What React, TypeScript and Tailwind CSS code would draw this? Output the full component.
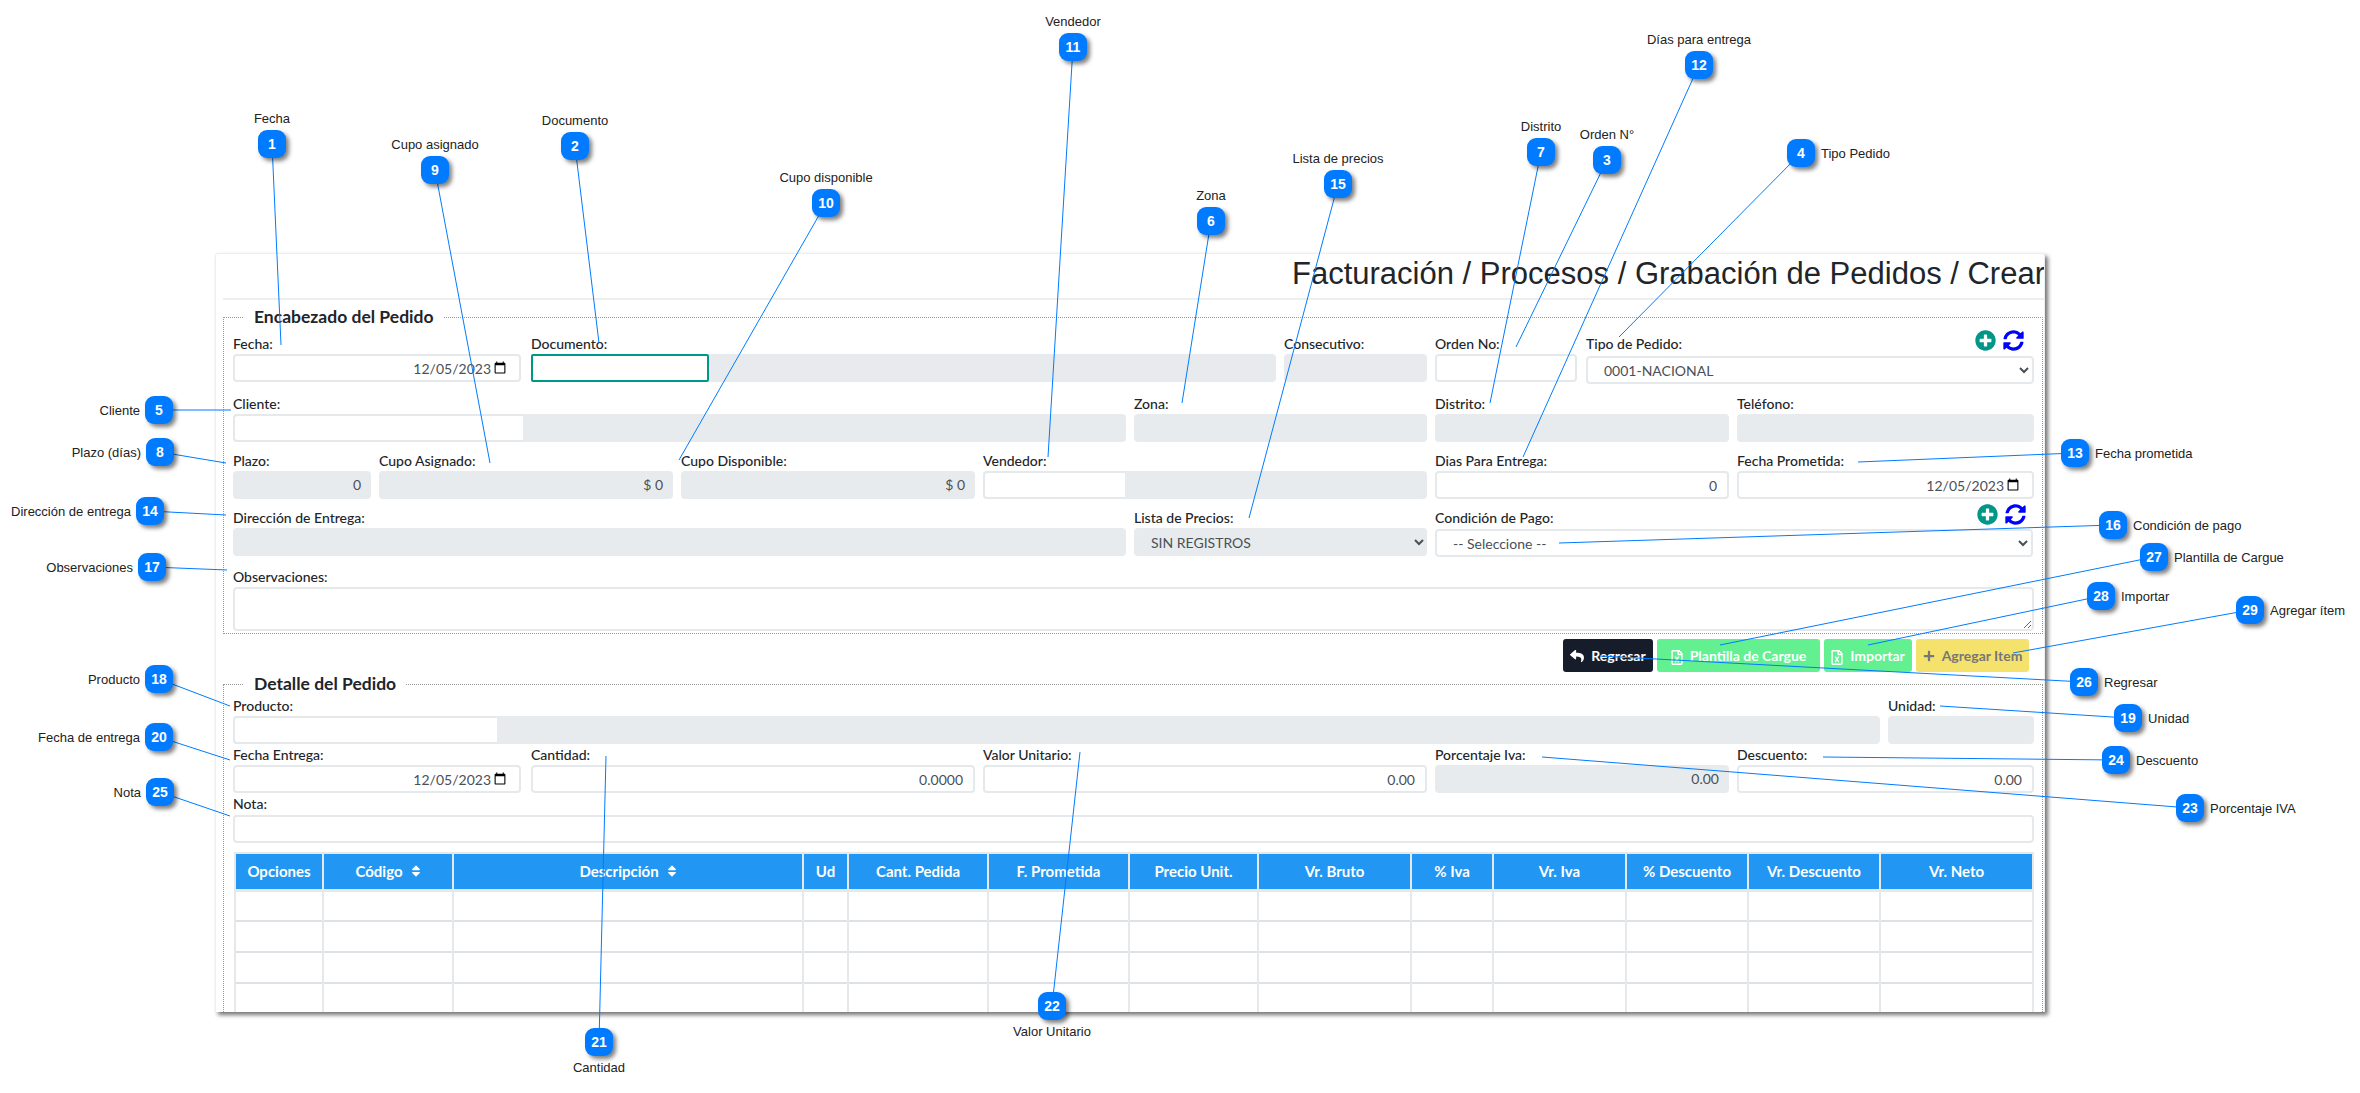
import { FaPlus, FaPlusCircle, FaRegFileExcel, FaReply, FaSort, FaSyncAlt } from "react-icons/fa";

const fontLato = "font-['Lato','Liberation_Sans',sans-serif]";
const inputBase = "block h-[28px] w-full rounded-[4px] border-2 border-[#e6e9eb] bg-white px-[10px] text-[14px] text-[#495057] outline-none";
const grayBox = "block h-[28px] w-full rounded-[4px] bg-[#e8ebed] px-[10px] text-right text-[14px] leading-[28px] text-[#495057]";
const labelClass = "block h-[20px] text-[14px] font-medium leading-[20px] text-[#212529]";
const btnClass = "flex h-[33px] items-center justify-center gap-[7px] rounded-[3px] text-[14px] font-bold";
const dateClass =
  "[&::-webkit-datetime-edit]:justify-end [&::-webkit-datetime-edit-day-field]:p-0 [&::-webkit-datetime-edit-month-field]:p-0 [&::-webkit-datetime-edit-year-field]:p-0";

type Side = "top" | "bottom" | "left" | "right";

const BADGES: { n: number; text: string; side: Side; pos: string }[] = [
  { n: 1, text: "Fecha", side: "top", pos: "left-[258px] top-[130px]" },
  { n: 2, text: "Documento", side: "top", pos: "left-[561px] top-[132px]" },
  { n: 3, text: "Orden N°", side: "top", pos: "left-[1593px] top-[146px]" },
  { n: 4, text: "Tipo Pedido", side: "right", pos: "left-[1787px] top-[139px]" },
  { n: 5, text: "Cliente", side: "left", pos: "left-[145px] top-[396px]" },
  { n: 6, text: "Zona", side: "top", pos: "left-[1197px] top-[207px]" },
  { n: 7, text: "Distrito", side: "top", pos: "left-[1527px] top-[138px]" },
  { n: 8, text: "Plazo (días)", side: "left", pos: "left-[146px] top-[438px]" },
  { n: 9, text: "Cupo asignado", side: "top", pos: "left-[421px] top-[156px]" },
  { n: 10, text: "Cupo disponible", side: "top", pos: "left-[812px] top-[189px]" },
  { n: 11, text: "Vendedor", side: "top", pos: "left-[1059px] top-[33px]" },
  { n: 12, text: "Días para entrega", side: "top", pos: "left-[1685px] top-[51px]" },
  { n: 13, text: "Fecha prometida", side: "right", pos: "left-[2061px] top-[439px]" },
  { n: 14, text: "Dirección de entrega", side: "left", pos: "left-[136px] top-[497px]" },
  { n: 15, text: "Lista de precios", side: "top", pos: "left-[1324px] top-[170px]" },
  { n: 16, text: "Condición de pago", side: "right", pos: "left-[2099px] top-[511px]" },
  { n: 17, text: "Observaciones", side: "left", pos: "left-[138px] top-[553px]" },
  { n: 18, text: "Producto", side: "left", pos: "left-[145px] top-[665px]" },
  { n: 19, text: "Unidad", side: "right", pos: "left-[2114px] top-[704px]" },
  { n: 20, text: "Fecha de entrega", side: "left", pos: "left-[145px] top-[723px]" },
  { n: 21, text: "Cantidad", side: "bottom", pos: "left-[585px] top-[1028px]" },
  { n: 22, text: "Valor Unitario", side: "bottom", pos: "left-[1038px] top-[992px]" },
  { n: 23, text: "Porcentaje IVA", side: "right", pos: "left-[2176px] top-[794px]" },
  { n: 24, text: "Descuento", side: "right", pos: "left-[2102px] top-[746px]" },
  { n: 25, text: "Nota", side: "left", pos: "left-[146px] top-[778px]" },
  { n: 26, text: "Regresar", side: "right", pos: "left-[2070px] top-[668px]" },
  { n: 27, text: "Plantilla de Cargue", side: "right", pos: "left-[2140px] top-[543px]" },
  { n: 28, text: "Importar", side: "right", pos: "left-[2087px] top-[582px]" },
  { n: 29, text: "Agregar ítem", side: "right", pos: "left-[2236px] top-[596px]" },
];

const LINES: number[][] = [
  [272, 144, 281, 345],
  [575, 146, 599, 343],
  [1607, 160, 1516, 347],
  [1801, 153, 1619, 337],
  [159, 410, 231, 410],
  [1211, 221, 1182, 403],
  [1541, 152, 1490, 403],
  [160, 452, 226, 463],
  [435, 170, 490, 463],
  [826, 203, 679, 460],
  [1073, 47, 1048, 457],
  [1699, 65, 1523, 457],
  [2075, 453, 1858, 462],
  [150, 511, 226, 515],
  [1338, 184, 1249, 518],
  [2113, 525, 1559, 543],
  [152, 567, 227, 570],
  [159, 679, 230, 706],
  [2128, 718, 1940, 706],
  [159, 737, 230, 760],
  [599, 1042, 606, 756],
  [1052, 1006, 1080, 752],
  [2190, 808, 1542, 757],
  [2116, 760, 1823, 757],
  [160, 792, 230, 816],
  [2084, 682, 1600, 656],
  [2154, 557, 1720, 645],
  [2101, 596, 1868, 645],
  [2250, 610, 2013, 653],
];

const COLUMNS = [
  { label: "Opciones", w: "w-[88px]" },
  { label: "Código", w: "w-[130px]", sort: true },
  { label: "Descripción", w: "w-[350px]", sort: true },
  { label: "Ud", w: "w-[45px]" },
  { label: "Cant. Pedida", w: "w-[140px]" },
  { label: "F. Prometida", w: "w-[141px]" },
  { label: "Precio Unit.", w: "w-[129px]" },
  { label: "Vr. Bruto", w: "w-[153px]" },
  { label: "% Iva", w: "w-[82px]" },
  { label: "Vr. Iva", w: "w-[133px]" },
  { label: "% Descuento", w: "w-[122px]" },
  { label: "Vr. Descuento", w: "w-[132px]" },
  { label: "Vr. Neto", w: "w-[153px]" },
];

function Badge({ n, text, side, pos }: { n: number; text: string; side: Side; pos: string }) {
  const captionClass = {
    top: "bottom-full left-1/2 mb-[4px] -translate-x-1/2",
    bottom: "top-full left-1/2 mt-[4px] -translate-x-1/2",
    left: "right-full top-1/2 mr-[5px] -translate-y-1/2",
    right: "left-full top-1/2 ml-[6px] -translate-y-1/2",
  }[side];
  return (
    <div className={`absolute flex h-[28px] w-[28px] items-center justify-center rounded-[9px] bg-[#007bff] text-[14px] font-bold text-white shadow-[3px_3px_4px_rgba(0,0,0,0.5)] ${pos}`}>
      {n}
      <span className={`absolute whitespace-nowrap text-[13px] font-normal leading-[15px] text-[#222] ${captionClass}`}>
        {text}
      </span>
    </div>
  );
}

function Label({ children }: { children: React.ReactNode }) {
  return <label className={labelClass}>{children}</label>;
}

function DateField({ label, width }: { label: string; width: string }) {
  return (
    <div className={width}>
      <Label>{label}</Label>
      <input type="date" defaultValue="2023-12-05" className={`${inputBase} ${dateClass}`} />
    </div>
  );
}

function GrayField({ label, value, width }: { label: string; value?: string; width: string }) {
  return (
    <div className={width}>
      <Label>{label}</Label>
      <div className={grayBox}>{value}</div>
    </div>
  );
}

function InputField({ label, value, width }: { label: string; value?: string; width: string }) {
  return (
    <div className={width}>
      <Label>{label}</Label>
      <input type="text" defaultValue={value} className={`${inputBase} text-right`} />
    </div>
  );
}

function LookupField({ label, width, inputWidth, focused }: { label: string; width: string; inputWidth: string; focused?: boolean }) {
  return (
    <div className={width}>
      <Label>{label}</Label>
      <div className="flex h-[28px] rounded-[4px] bg-[#e8ebed]">
        <input
          type="text"
          className={`block h-[28px] ${inputWidth} bg-white outline-none ${focused ? "rounded-[2px] border-2 border-[#009688]" : "rounded-l-[4px] border-2 border-r-0 border-[#e6e9eb]"}`}
        />
      </div>
    </div>
  );
}

function ActionIcons({ className }: { className: string }) {
  return (
    <span className={`flex items-center gap-[7px] ${className}`}>
      <FaPlusCircle className="h-[21px] w-[21px] text-[#009688]" />
      <FaSyncAlt className="h-[21px] w-[21px] text-[#0000ff]" />
    </span>
  );
}

function Legend({ children }: { children: React.ReactNode }) {
  return <legend className="ml-[11px] h-[24px] px-[10px] text-[17.5px] font-bold leading-[24px] text-[#212529]">{children}</legend>;
}

export default function App() {
  return (
    <div className={`relative h-[1093px] w-[2360px] overflow-hidden bg-white ${fontLato}`}>
      <div className="ml-[215px] pt-[253px]">
        <div className="h-[759px] w-[1830px] overflow-hidden rounded-t-[3px] border-x border-t border-[#eceeef] bg-white pl-[7px] pr-[1px] shadow-[3px_3px_4px_rgba(0,0,0,0.55)]">
          <div className="-mr-[2px] h-[46px] border-b-2 border-[#eceeef] text-right font-['Liberation_Sans',sans-serif] text-[31px] leading-[40px] text-[#212529]">
            Facturación / Procesos / Grabación de Pedidos / Crear
          </div>

          <fieldset className="mt-[5px] h-[329px] border border-dotted border-[#999] pl-[9px] pr-[8px] pt-[5px]">
            <Legend>Encabezado del Pedido</Legend>

            <div className="flex">
              <DateField label="Fecha:" width="w-[288px]" />
              <div className="ml-[10px] w-[745px]">
                <LookupField label="Documento:" width="w-full" inputWidth="w-[178px]" focused />
              </div>
              <GrayField label="Consecutivo:" width="ml-[8px] w-[143px]" />
              <InputField label="Orden No:" width="ml-[8px] w-[142px]" />
              <div className="ml-[9px] w-[448px]">
                <div className="flex h-[20px] items-center justify-between">
                  <Label>Tipo de Pedido:</Label>
                  <ActionIcons className="mr-[10px] -mt-[7px]" />
                </div>
                <select className={`${inputBase} mt-[2px] h-[26px] pl-[12px]`}>
                  <option>0001-NACIONAL</option>
                </select>
              </div>
            </div>

            <div className="mt-[10px] flex">
              <LookupField label="Cliente:" width="w-[893px]" inputWidth="w-[290px]" />
              <GrayField label="Zona:" width="ml-[8px] w-[293px]" />
              <GrayField label="Distrito:" width="ml-[8px] w-[294px]" />
              <GrayField label="Teléfono:" width="ml-[8px] w-[297px]" />
            </div>

            <div className="mt-[9px] flex">
              <GrayField label="Plazo:" value="0" width="w-[138px]" />
              <GrayField label="Cupo Asignado:" value="$ 0" width="ml-[8px] w-[294px]" />
              <GrayField label="Cupo Disponible:" value="$ 0" width="ml-[8px] w-[294px]" />
              <LookupField label="Vendedor:" width="ml-[8px] w-[444px]" inputWidth="w-[142px]" />
              <InputField label="Dias Para Entrega:" value="0" width="ml-[8px] w-[294px]" />
              <DateField label="Fecha Prometida:" width="ml-[8px] w-[297px]" />
            </div>

            <div className="mt-[9px] flex">
              <GrayField label="Dirección de Entrega:" width="w-[893px]" />
              <div className="ml-[8px] w-[293px]">
                <Label>Lista de Precios:</Label>
                <select className="block h-[28px] w-full rounded-[4px] bg-[#e8ebed] pl-[13px] text-[14px] text-[#495057] outline-none">
                  <option>SIN REGISTROS</option>
                </select>
              </div>
              <div className="ml-[8px] w-[598px]">
                <div className="flex h-[20px] items-center justify-between">
                  <Label>Condición de Pago:</Label>
                  <ActionIcons className="mr-[7px] -mt-[7px]" />
                </div>
                <select className={`${inputBase} mt-[1px] pl-[12px]`}>
                  <option>-- Seleccione --</option>
                </select>
              </div>
            </div>

            <div className="mt-[10px]">
              <Label>Observaciones:</Label>
              <textarea className="block h-[44px] w-full rounded-[4px] border-2 border-[#e6e9eb] bg-white outline-none" />
            </div>
          </fieldset>

          <div className="mt-[5px] flex justify-end gap-[4px] pr-[14px] text-white">
            <button type="button" className={`${btnClass} w-[90px] bg-[#161c2a]`}>
              <FaReply className="h-[14px] w-[14px]" />
              Regresar
            </button>
            <button type="button" className={`${btnClass} w-[163px] bg-[#62f091]`}>
              <FaRegFileExcel className="h-[15px] w-[12px] translate-y-[2px]" />
              Plantilla de Cargue
            </button>
            <button type="button" className={`${btnClass} w-[88px] bg-[#62f091]`}>
              <FaRegFileExcel className="h-[15px] w-[12px] translate-y-[2px]" />
              Importar
            </button>
            <button type="button" className={`${btnClass} w-[113px] bg-[#f5e26d] text-[#777]`}>
              <FaPlus className="h-[12px] w-[12px]" />
              Agregar Item
            </button>
          </div>

          <fieldset className="h-[400px] border border-dotted border-[#999] pl-[9px] pr-[8px]">
            <Legend>Detalle del Pedido</Legend>

            <div className="flex">
              <LookupField label="Producto:" width="w-[1647px]" inputWidth="w-[264px]" />
              <GrayField label="Unidad:" width="ml-[8px] w-[146px]" />
            </div>

            <div className="mt-[1px] flex">
              <DateField label="Fecha Entrega:" width="w-[288px]" />
              <InputField label="Cantidad:" value="0.0000" width="ml-[10px] w-[444px]" />
              <InputField label="Valor Unitario:" value="0.00" width="ml-[8px] w-[444px]" />
              <GrayField label="Porcentaje Iva:" value="0.00" width="ml-[8px] w-[294px]" />
              <InputField label="Descuento:" value="0.00" width="ml-[8px] w-[297px]" />
            </div>

            <div className="mt-[1px]">
              <Label>Nota:</Label>
              <input type="text" className={`${inputBase} mt-[1px] h-[26px]`} />
            </div>

            <table className="ml-[1px] mt-[9px] w-[1798px] table-fixed border-collapse border-t-2 border-[#e6e9eb] text-[15px]">
              <thead>
                <tr className="h-[37px] border-b-[3px] border-[#e6e9eb] bg-[#2196f3] text-white">
                  {COLUMNS.map((c) => (
                    <th key={c.label} className={`${c.w} border-x-2 border-[#e6e9eb] p-0 text-center font-bold`}>
                      <span className="inline-flex items-center gap-[8px]">
                        {c.label}
                        {c.sort && <FaSort className="h-[14px] w-[10px]" />}
                      </span>
                    </th>
                  ))}
                </tr>
              </thead>
              <tbody>
                {[1, 2, 3, 4, 5].map((r) => (
                  <tr key={r} className="h-[31px] border-b-2 border-[#dee2e6]">
                    {COLUMNS.map((c) => (
                      <td key={c.label} className="border-x-2 border-[#e6e9eb] p-0" />
                    ))}
                  </tr>
                ))}
              </tbody>
            </table>
          </fieldset>
        </div>
      </div>

      <svg className="pointer-events-none absolute left-0 top-0 h-[1093px] w-[2360px]" viewBox="0 0 2360 1093">
        {LINES.map(([x1, y1, x2, y2], i) => (
          <line key={i} x1={x1} y1={y1} x2={x2} y2={y2} stroke="#007bff" strokeWidth="1" />
        ))}
      </svg>

      <div className="font-['Liberation_Sans',sans-serif]">
        {BADGES.map((b) => (
          <Badge key={b.n} {...b} />
        ))}
      </div>
    </div>
  );
}
